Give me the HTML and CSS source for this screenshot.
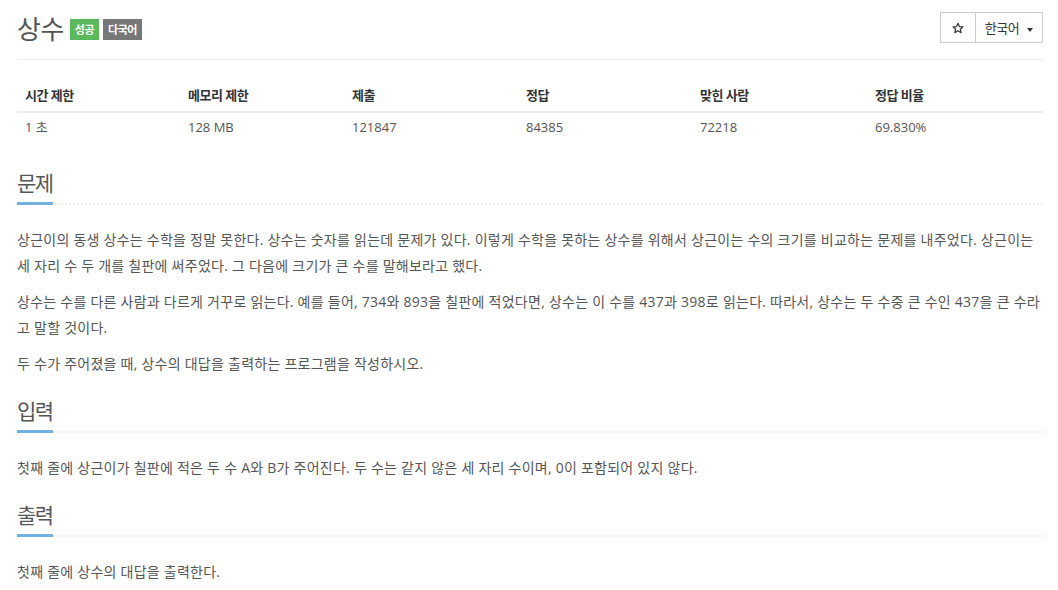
FILE: index.html
```html
<!DOCTYPE html>
<html lang="ko">
<head>
  <meta charset="UTF-8" />
  <title>상수</title>
  <link rel="stylesheet" href="styles.css">
</head>
<body>
  <div class="page">
    <div class="page-header">
      <h1>
        <span class="title">상수</span>
        <span class="label label-success">성공</span>
        <span class="label label-default">다국어</span>
      </h1>
      <div class="btn-group">
        <button class="btn btn-star">
          <svg width="12" height="12" viewBox="0 0 24 24"><path d="M12 2.5l2.9 6.6 7.1.6-5.4 4.7 1.6 7-6.2-3.7-6.2 3.7 1.6-7L2 9.7l7.1-.6z" fill="none" stroke="#333" stroke-width="2.4" stroke-linejoin="round"/></svg>
        </button>
        <button class="btn btn-lang">한국어 <span class="caret"></span></button>
      </div>
    </div>

    <table class="info-table">
      <thead>
        <tr>
          <th>시간 제한</th>
          <th>메모리 제한</th>
          <th>제출</th>
          <th>정답</th>
          <th>맞힌 사람</th>
          <th>정답 비율</th>
        </tr>
      </thead>
      <tbody>
        <tr>
          <td>1 초 </td>
          <td>128 MB</td>
          <td>121847</td>
          <td>84385</td>
          <td>72218</td>
          <td>69.830%</td>
        </tr>
      </tbody>
    </table>

    <section class="problem-section">
      <div class="headline"><h2>문제</h2></div>
      <div class="problem-text">
        <p>상근이의 동생 상수는 수학을 정말 못한다. 상수는 숫자를 읽는데 문제가 있다. 이렇게 수학을 못하는 상수를 위해서 상근이는 수의 크기를 비교하는 문제를 내주었다. 상근이는 세 자리 수 두 개를 칠판에 써주었다. 그 다음에 크기가 큰 수를 말해보라고 했다.</p>
        <p>상수는 수를 다른 사람과 다르게 거꾸로 읽는다. 예를 들어, 734와 893을 칠판에 적었다면, 상수는 이 수를 437과 398로 읽는다. 따라서, 상수는 두 수중 큰 수인 437을 큰 수라고 말할 것이다.</p>
        <p>두 수가 주어졌을 때, 상수의 대답을 출력하는 프로그램을 작성하시오.</p>
      </div>
    </section>

    <section class="problem-section">
      <div class="headline"><h2>입력</h2></div>
      <div class="problem-text">
        <p>첫째 줄에 상근이가 칠판에 적은 두 수 A와 B가 주어진다. 두 수는 같지 않은 세 자리 수이며, 0이 포함되어 있지 않다.</p>
      </div>
    </section>

    <section class="problem-section">
      <div class="headline"><h2>출력</h2></div>
      <div class="problem-text">
        <p>첫째 줄에 상수의 대답을 출력한다.</p>
      </div>
    </section>
  </div>
</body>
</html>
```

FILE: styles.css
```css
/* basic page setup */
html, body {
  margin: 0;
  padding: 0;
  background: #fff;
  font-family: "Open Sans", "Noto Sans CJK KR", sans-serif;
  color: #555;
  box-sizing: border-box;
}
*, *::before, *::after {
  box-sizing: inherit;
}

.page {
  padding: 0 15px 0 17px;
}

/* title row with badges and buttons */
.page-header {
  display: flex;
  justify-content: space-between;
  align-items: flex-start;
  padding-top: 12px;
  height: 60px;
  border-bottom: 1px solid #eee;
}

h1 {
  margin: 0;
  display: flex;
  align-items: center;
  gap: 4px;
  font-weight: 400;
  height: 31px;
}
.title {
  font-size: 26px;
  color: #555;
  letter-spacing: -0.5px;
  margin-right: 2px;
}
.label {
  display: inline-block;
  font-size: 11px;
  font-weight: 700;
  color: #fff;
  padding: 0 5px;
  height: 21px;
  line-height: 21px;
  margin-top: 4px;
  letter-spacing: -0.5px;
}
.label-success {
  background: #5cb85c;
}
.label-default {
  background: #777;
}

.btn-group {
  display: flex;
}
.btn {
  background: #fff;
  border: 1px solid #ccc;
  height: 31px;
  font-family: inherit;
  font-size: 13px;
  color: #333;
  padding: 0 8px;
  white-space: nowrap;
  cursor: pointer;
}
.btn-star {
  width: 36px;
  display: flex;
  align-items: center;
  justify-content: center;
}
.btn-lang {
  margin-left: -1px;
  width: 68px;
  letter-spacing: -0.5px;
}
.caret {
  display: inline-block;
  width: 0;
  height: 0;
  margin-left: 5px;
  vertical-align: middle;
  border-top: 4px solid #333;
  border-left: 3px solid transparent;
  border-right: 3px solid transparent;
}

/* statistics table */
.info-table {
  width: 100%;
  border-collapse: collapse;
  margin-top: 16px;
  font-size: 13px;
}
.info-table th,
.info-table td {
  text-align: left;
  padding: 8px;
  line-height: 18px;
}
.info-table th {
  color: #333;
  font-weight: 700;
  border-bottom: 2px solid #eee;
  padding-top: 10px;
  padding-bottom: 7px;
  letter-spacing: -0.5px;
}
.info-table td {
  padding-top: 5px;
}
.info-table th:nth-child(1) { width: 163px; }
.info-table th:nth-child(2) { width: 164px; }
.info-table th:nth-child(3) { width: 174px; }
.info-table th:nth-child(4) { width: 174px; }
.info-table th:nth-child(5) { width: 175px; }

/* problem sections */
.problem-section {
  margin-top: 25px;
}
.problem-section + .problem-section {
  margin-top: 20px;
}
.headline {
  border-bottom: 2px dotted #eee;
}
.headline h2 {
  display: inline-block;
  margin: 0 0 -2px;
  font-size: 21px;
  font-weight: 400;
  color: #555;
  letter-spacing: -1.5px;
  line-height: 28px;
  padding-bottom: 5px;
  border-bottom: 3px solid #72b1e0;
}
.problem-text {
  font-size: 14px;
  line-height: 26px;
  letter-spacing: 0.25px;
  padding-top: 22px;
}
.problem-text p {
  margin: 0 0 10px;
}
```
